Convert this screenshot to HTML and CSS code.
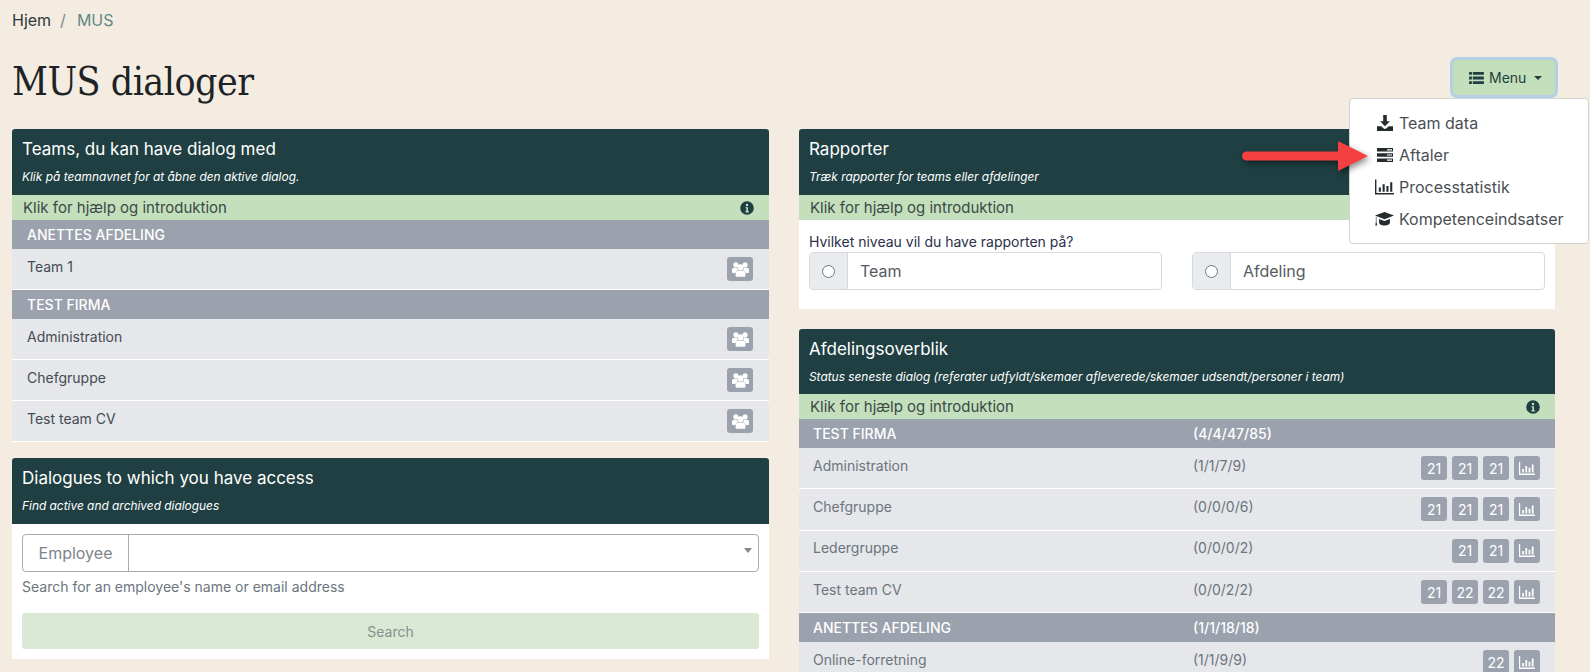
FILE: index.html
```html
<!DOCTYPE html>
<html lang="da">
<head>
<meta charset="utf-8">
<title>MUS dialoger</title>
<link rel="stylesheet" href="styles.css">
</head>
<body>
<svg class="defs" width="0" height="0" aria-hidden="true">
  <symbol id="i-users" viewBox="0 0 20 17">
    <circle cx="4.600" cy="3" r="3"/><circle cx="15.400" cy="3" r="3"/><circle cx="10" cy="6" r="3.600"/>
    <path d="M0 9c0-1.700 1-2.700 2.400-2.700h3.200c.2 1.200.8 2.200 1.700 3-1.700.5-3 1.700-3.300 3.200H1.200C.5 12.500 0 12 0 11.300z"/>
    <path d="M20 9c0-1.700-1-2.700-2.400-2.700h-3.200c-.2 1.200-.8 2.200-1.700 3 1.700.5 3 1.700 3.300 3.200h2.800c.7 0 1.200-.5 1.200-1.200z"/>
    <path d="M7.500 10h5c1.900 0 3.300 1.400 3.300 3.200v2.300c0 .8-.7 1.500-1.500 1.500H5.700c-.8 0-1.500-.7-1.500-1.500v-2.300c0-1.800 1.400-3.200 3.300-3.200z"/>
  </symbol>
  <symbol id="i-chart" viewBox="0 0 20 16">
    <path d="M0 0h1.500v14.200H20V16H0z"/>
    <path d="M4 8.500h2.200v4.500H4zM8 5h2.200v8H8zM12 7h2.200v6H12zM16 3h2.200v10H16z"/>
  </symbol>
  <symbol id="i-info" viewBox="0 0 16 16">
    <path fill-rule="evenodd" d="M8 .2a7.800 7.800 0 1 0 0 15.600A7.800 7.800 0 0 0 8 .2zM8 3.200a1.400 1.400 0 1 1 0 2.800 1.400 1.400 0 0 1 0-2.800zM6.200 7h2.900v4.700h1v1.300H6.200v-1.300h1V8.300h-1z"/>
  </symbol>
</svg>
<div class="page">
  <nav class="crumbs"><a class="crumb-home">Hjem</a><span class="crumb-sep">/</span><span class="crumb-now">MUS</span></nav>
  <header class="top">
    <h1 class="title">MUS dialoger</h1>
    <div class="menu-wrap">
      <button class="menu-btn" type="button">
        <svg class="menu-icon" viewBox="0 0 16 13"><path d="M0 0h3v3H0zM4 0h12v3H4zM0 5h3v3H0zM4 5h12v3H4zM0 10h3v3H0zM4 10h12v3H4z"/></svg>
        Menu<span class="caret"></span>
      </button>
      <div class="dropdown">
        <a class="dd-item">
          <svg class="dd-icon" viewBox="0 0 16 16"><path d="M6.200 0h3.600v6.200h3.100L8 11.300 3.100 6.200h3.100zM0 11.200h4.200L6.800 13.500c.7.600 1.700.6 2.400 0l2.600-2.300H16V16H0z"/></svg>
          Team data</a>
        <a class="dd-item">
          <svg class="dd-icon" viewBox="0 0 16 14"><path d="M0 0h16v3.600H0zM0 5.200h16v3.600H0zM0 10.400h16V14H0z"/><path class="notch" d="M10 1.200h5v1.200h-5zM10 6.400h5v1.200h-5zM10 11.600h5v1.200h-5z"/></svg>
          Aftaler</a>
        <a class="dd-item">
          <svg class="dd-icon wide"><use href="#i-chart"/></svg>
          Processtatistik</a>
        <a class="dd-item">
          <svg class="dd-icon wide" viewBox="0 0 20 15"><path d="M10 0l10 3.800-10 3.900L0 3.800z"/><path d="M4.300 7.500L10 9.600l5.700-2.100v3.700c0 1.800-2.600 3.200-5.700 3.200s-5.700-1.400-5.700-3.200z"/><path d="M1.500 5v5.500l.8 3.800H.3l.6-3.800V4.800z"/></svg>
          Kompetenceindsatser</a>
      </div>
    </div>
  </header>

  <main class="columns">
    <div class="col">
      <section class="card">
        <div class="card-head">
          <h2 class="card-title">Teams, du kan have dialog med</h2>
          <p class="card-sub">Klik på teamnavnet for at åbne den aktive dialog.</p>
        </div>
        <div class="help"><span>Klik for hjælp og introduktion</span><svg class="info"><use href="#i-info"/></svg></div>
        <div class="group">ANETTES AFDELING</div>
        <div class="row"><span class="row-name">Team 1</span><span class="btn"><svg class="ic-users"><use href="#i-users"/></svg></span></div>
        <div class="group">TEST FIRMA</div>
        <div class="row"><span class="row-name">Administration</span><span class="btn"><svg class="ic-users"><use href="#i-users"/></svg></span></div>
        <div class="row"><span class="row-name">Chefgruppe</span><span class="btn"><svg class="ic-users"><use href="#i-users"/></svg></span></div>
        <div class="row"><span class="row-name">Test team CV</span><span class="btn"><svg class="ic-users"><use href="#i-users"/></svg></span></div>
      </section>

      <section class="card">
        <div class="card-head">
          <h2 class="card-title">Dialogues to which you have access</h2>
          <p class="card-sub">Find active and archived dialogues</p>
        </div>
        <div class="card-body search-body">
          <div class="emp-group">
            <span class="emp-label">Employee</span>
            <span class="emp-select"><span class="emp-caret"></span></span>
          </div>
          <p class="hint">Search for an employee's name or email address</p>
          <button class="search-btn" type="button">Search</button>
        </div>
      </section>
    </div>

    <div class="col">
      <section class="card">
        <div class="card-head">
          <h2 class="card-title">Rapporter</h2>
          <p class="card-sub">Træk rapporter for teams eller afdelinger</p>
        </div>
        <div class="help"><span>Klik for hjælp og introduktion</span><svg class="info"><use href="#i-info"/></svg></div>
        <div class="card-body report-body">
          <p class="question">Hvilket niveau vil du have rapporten på?</p>
          <div class="radios">
            <div class="radio-group"><span class="radio-box"><span class="radio"></span></span><span class="radio-text">Team</span></div>
            <div class="radio-group"><span class="radio-box"><span class="radio"></span></span><span class="radio-text">Afdeling</span></div>
          </div>
        </div>
      </section>

      <section class="card">
        <div class="card-head">
          <h2 class="card-title">Afdelingsoverblik</h2>
          <p class="card-sub">Status seneste dialog (referater udfyldt/skemaer afleverede/skemaer udsendt/personer i team)</p>
        </div>
        <div class="help"><span>Klik for hjælp og introduktion</span><svg class="info"><use href="#i-info"/></svg></div>
        <div class="group stat"><span class="s-name">TEST FIRMA</span><span class="s-count">(4/4/47/85)</span></div>
        <div class="row stat"><span class="s-name muted">Administration</span><span class="s-count muted">(1/1/7/9)</span>
          <span class="btns"><span class="btn">21</span><span class="btn">21</span><span class="btn">21</span><span class="btn"><svg class="ic-chart"><use href="#i-chart"/></svg></span></span></div>
        <div class="row stat"><span class="s-name muted">Chefgruppe</span><span class="s-count muted">(0/0/0/6)</span>
          <span class="btns"><span class="btn">21</span><span class="btn">21</span><span class="btn">21</span><span class="btn"><svg class="ic-chart"><use href="#i-chart"/></svg></span></span></div>
        <div class="row stat"><span class="s-name muted">Ledergruppe</span><span class="s-count muted">(0/0/0/2)</span>
          <span class="btns"><span class="btn">21</span><span class="btn">21</span><span class="btn"><svg class="ic-chart"><use href="#i-chart"/></svg></span></span></div>
        <div class="row stat"><span class="s-name muted">Test team CV</span><span class="s-count muted">(0/0/2/2)</span>
          <span class="btns"><span class="btn">21</span><span class="btn">22</span><span class="btn">22</span><span class="btn"><svg class="ic-chart"><use href="#i-chart"/></svg></span></span></div>
        <div class="group stat"><span class="s-name">ANETTES AFDELING</span><span class="s-count">(1/1/18/18)</span></div>
        <div class="row stat"><span class="s-name muted">Online-forretning</span><span class="s-count muted">(1/1/9/9)</span>
          <span class="btns"><span class="btn">22</span><span class="btn"><svg class="ic-chart"><use href="#i-chart"/></svg></span></span></div>
      </section>
    </div>
  </main>
</div>
<svg class="arrow" viewBox="0 0 127 30" aria-hidden="true">
  <path d="M4.500 10.500H96V0l30 15-30 15V19.500H4.500a4.500 4.500 0 0 1 0-9z"/>
</svg>
</body>
</html>
```
FILE: styles.css
```css
* { box-sizing: border-box; }
html, body { height: 100%; overflow: hidden; }
body {
  margin: 0;
  background: #f4ece1;
  color: #212529;
  font-family: Inter, "Noto Sans", sans-serif;
  font-size: 14px;
  position: relative;
}
.defs { position: absolute; }
.page { padding: 0 35px 0 12px; }

.crumbs { display: flex; height: 40px; align-items: center; font-size: 16px; }
.crumb-home { color: #2b3a3c; }
.crumb-sep { color: #7a8a8a; margin: 0 11px 0 9px; }
.crumb-now { color: #5f8a85; }

.top { display: flex; justify-content: space-between; align-items: flex-start; height: 89px; }
.title {
  margin: 0;
  padding-top: 13px;
  font-family: "DejaVu Serif Condensed", "DejaVu Serif", serif;
  font-size: 39px;
  font-weight: 400;
  letter-spacing: -.5px;
  line-height: 58px;
  color: #1d2326;
}
.menu-wrap { position: relative; margin-top: 20px; }
.menu-btn {
  display: flex;
  align-items: center;
  width: 102px;
  height: 35px;
  padding: 0 0 0 16px;
  border: 0;
  border-radius: 4px;
  background: #c3dfbc;
  box-shadow: 0 0 0 3px #b5cfe6;
  color: #1f3f42;
  font: 14px Inter, sans-serif;
}
.menu-icon { width: 15px; height: 12px; margin-right: 5px; fill: #1f3f42; }
.caret {
  margin-left: 8px;
  border-top: 4.500px solid #1f3f42;
  border-left: 4.500px solid transparent;
  border-right: 4.500px solid transparent;
}
.dropdown {
  position: absolute;
  z-index: 5;
  top: 38px;
  right: -34px;
  width: 240px;
  height: 146px;
  padding: 8px 0;
  background: #fff;
  border: 1px solid #d3d3d3;
  border-radius: 4px;
}
.dd-item {
  display: flex;
  align-items: center;
  height: 32px;
  padding-left: 49px;
  position: relative;
  font-size: 16px;
  color: #4b4f54;
}
.dd-icon { position: absolute; left: 27px; top: 8px; width: 16px; height: 16px; fill: #262b2e; }
.dd-icon.wide { left: 25px; width: 19px; }
.notch { fill: #fff; }

.columns { display: grid; grid-template-columns: 757px 756px; column-gap: 30px; align-items: start; }
.col { display: flex; flex-direction: column; gap: 20px; }
.col:first-child { gap: 16px; }

.card { background: #fff; border-radius: 3px 3px 0 0; overflow: hidden; }
.card-head { height: 66px; padding: 9px 10px 0; background: #1f3f42; color: #fff; }
.col:last-child .card:last-child .card-head { height: 65px; }
.card-title { margin: 0; font-size: 17px; font-weight: 400; line-height: 22px; }
.card-sub { margin: 9px 0 0; font-size: 11.900px; font-style: italic; line-height: 16px; }

.help {
  display: flex;
  justify-content: space-between;
  align-items: center;
  height: 25px;
  padding: 0 15px 0 11px;
  background: #c3dfbc;
  color: #3c4a46;
  font-size: 15px;
}
.info { width: 14px; height: 14px; fill: #1f3f42; }

.group {
  display: flex;
  align-items: center;
  height: 29px;
  padding-left: 15px;
  background: #9ba1ad;
  color: #fff;
  font-weight: 500;
}
.row {
  display: flex;
  align-items: center;
  justify-content: space-between;
  height: 41px;
  padding: 0 16px 0 15px;
  background: #e5e7eb;
  border-bottom: 1px solid #fff;
  color: #444b52;
}
.row-name { position: relative; top: -3px; }
.btn {
  display: flex;
  align-items: center;
  justify-content: center;
  width: 26px;
  height: 24px;
  border-radius: 3px;
  background: #9ba1ad;
  color: #fff;
  font-size: 14px;
}
.ic-users { width: 17px; height: 15px; fill: #fff; }
.ic-chart { width: 16px; height: 13px; fill: #fff; }
.btns { display: flex; gap: 5px; margin-left: auto; }

.stat { padding-left: 14px; }
.row.stat { height: 41.330px; padding-right: 15px; }
.s-name { width: 380px; }
.s-count { width: 200px; }
.row.stat .s-name, .row.stat .s-count { position: relative; top: -3px; }
.muted { color: #6c757d; }

.search-body { padding: 10px; height: 135px; }
.emp-group { display: flex; height: 38px; border: 1px solid #aaa; border-radius: 4px; }
.emp-label {
  display: flex;
  align-items: center;
  justify-content: center;
  width: 106px;
  border-right: 1px solid #aaa;
  color: #7d858c;
  font-size: 16px;
}
.emp-select { flex: 1; position: relative; }
.emp-caret {
  position: absolute;
  right: 6px;
  top: 13px;
  border-top: 5px solid #888;
  border-left: 4px solid transparent;
  border-right: 4px solid transparent;
}
.hint { margin: 6px 0 0; color: #6c757d; font-size: 14px; line-height: 17px; }
.search-btn {
  display: block;
  width: 100%;
  height: 36px;
  margin-top: 18px;
  border: 0;
  border-radius: 3px;
  background: #d9e9d5;
  color: #86908c;
  font: 14px Inter, sans-serif;
}

.report-body { height: 89px; padding: 12px 10px 0; }
.question { margin: 0; font-size: 14px; line-height: 20px; color: #2b2f4a; }
.radios { display: grid; grid-template-columns: 1fr 1fr; column-gap: 30px; }
.radio-group { display: flex; height: 38px; border: 1px solid #d7d9dc; border-radius: 4px; }
.radio-box {
  display: flex;
  align-items: center;
  justify-content: center;
  width: 38px;
  background: #e9ecef;
  border-right: 1px solid #d7d9dc;
}
.radio { width: 13px; height: 13px; border: 1px solid #767676; border-radius: 50%; background: #fff; }
.radio-text { padding-left: 12px; line-height: 36px; font-size: 16px; color: #555b60; }

.arrow {
  position: absolute;
  z-index: 6;
  left: 1242px;
  top: 141px;
  width: 127px;
  height: 30px;
  fill: #f44040;
  filter: drop-shadow(2px 3px 3px rgba(0,0,0,.45));
}
```
